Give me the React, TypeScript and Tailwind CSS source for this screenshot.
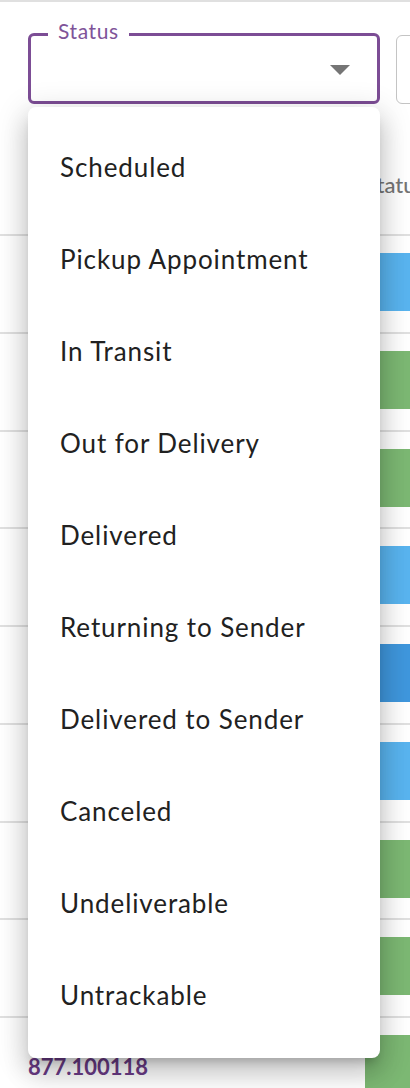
import React from "react";

const items = [
  "Scheduled",
  "Pickup Appointment",
  "In Transit",
  "Out for Delivery",
  "Delivered",
  "Returning to Sender",
  "Delivered to Sender",
  "Canceled",
  "Undeliverable",
  "Untrackable",
];

const rows: { color: string; label?: string }[] = [
  { color: "bg-[#59b4ef]" },
  { color: "bg-[#7cb873]" },
  { color: "bg-[#7cb873]" },
  { color: "bg-[#59b4ef]" },
  { color: "bg-[#3f97dd]" },
  { color: "bg-[#59b4ef]" },
  { color: "bg-[#7cb873]" },
  { color: "bg-[#7cb873]" },
  { color: "bg-[#7cb873]", label: "877.100118" },
];

export default function App() {
  return (
    <div
      className="relative w-[410px] h-[1088px] overflow-hidden bg-white"
      style={{ fontFamily: "Lato, 'Liberation Sans', sans-serif" }}
    >
      <div className="h-[2px] bg-[#e0e0e0]" />
      {/* Filters */}
      <div className="flex gap-[16px] pl-[28px] pt-[31px]">
        <div className="relative shrink-0 w-[352px] h-[71px] border-[3px] border-[#7c4d95] rounded-[6px] flex items-center justify-end pr-[27px]">
          <span className="absolute left-[17px] top-[-17px] bg-white px-[10px] text-[21px] leading-[24px] tracking-[0.6px] text-[#7f5499]">
            Status
          </span>
          <svg width="20" height="10" viewBox="0 0 20 10" className="mt-[3px]">
            <path d="M0 0 L20 0 L10 10 Z" fill="#757575" />
          </svg>
        </div>
        <div className="shrink-0 w-[200px] h-[69px] mt-[2px] border-[1.5px] border-[#c4c4c4] rounded-[6px]" />
      </div>
      {/* Table */}
      <div className="h-[132px] border-b-2 border-[#e0e0e0] flex">
        <div className="w-[365px] shrink-0" />
        <div className="pt-[69px] text-[22px] leading-[24px] font-medium text-[#757575] whitespace-nowrap">
          Status
        </div>
      </div>
      {rows.map((r, i) => (
        <div key={i} className="h-[97.75px] border-b-2 border-[#e0e0e0] flex">
          <div className="w-[365px] shrink-0 pl-[28px] flex items-center">
            {r.label && (
              <span className="text-[22px] leading-[24px] font-bold text-[#6a3b86] pt-[2px]">
                {r.label}
              </span>
            )}
          </div>
          <div className={`w-[120px] h-[58px] mt-[17px] shrink-0 ${r.color}`} />
        </div>
      ))}
      {/* Menu overlay */}
      <div className="absolute left-[28px] top-[107px] w-[352px] h-[951px] bg-white rounded-[8px] py-[16px] shadow-[0px_8px_10px_-5px_rgba(0,0,0,0.2),0px_16px_24px_2px_rgba(0,0,0,0.14),0px_6px_30px_5px_rgba(0,0,0,0.12)]">
        {items.map((t) => (
          <div
            key={t}
            className="h-[92px] flex items-center pl-[32px] pb-[4px] text-[26px] tracking-[0.9px] text-[#212121]"
          >
            {t}
          </div>
        ))}
      </div>
    </div>
  );
}
